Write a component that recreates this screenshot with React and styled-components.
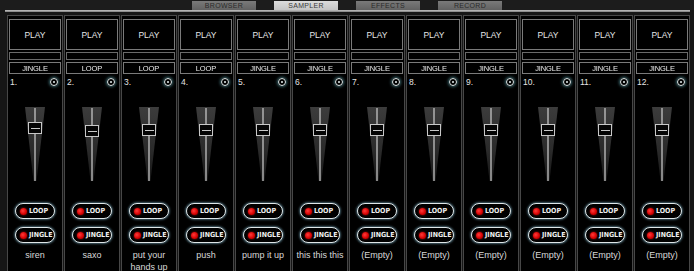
import React from "react";
import styled, { createGlobalStyle } from "styled-components";

const GlobalStyle = createGlobalStyle`
  html, body { margin: 0; padding: 0; }
  body {
    background: #161616;
    width: 694px;
    height: 271px;
    overflow: hidden;
    font-family: "Liberation Sans", Arial, sans-serif;
    -webkit-font-smoothing: antialiased;
  }
`;

const Page = styled.div`
  width: 694px;
  height: 271px;
  overflow: hidden;
  background: #161616;
`;

const TopBar = styled.div`
  height: 10px;
  display: flex;
  align-items: flex-end;
  gap: 18px;
  padding-left: 192px;
  background: #1c1c1c;
`;

const Tab = styled.div`
  width: 64px;
  height: 9px;
  display: flex;
  align-items: center;
  justify-content: center;
  font-size: 7px;
  letter-spacing: 0.3px;
  color: ${(p) => (p.$active ? "#3a3a3a" : "#2a2a2a")};
  background: ${(p) =>
    p.$active
      ? "linear-gradient(#dcdcdc, #c4c4c4)"
      : "linear-gradient(#7a7a7a, #626262)"};
`;

const Rule = styled.div`
  height: 2px;
  margin: 0 4px 0 5px;
  background: linear-gradient(#c4c4c4, #7c7c7c);
`;

const Columns = styled.div`
  display: flex;
  gap: 1px;
  padding: 3px 0 0 7px;
`;

const Column = styled.div`
  width: 56px;
  height: 262px;
  box-sizing: border-box;
  border: 1px solid #474747;
  background: #000;
  padding: 3px 1px 0;
  display: flex;
  flex-direction: column;
`;

const PlayBox = styled.div`
  height: 31px;
  box-sizing: border-box;
  border: 1px solid #7a7a7a;
  display: flex;
  align-items: center;
  justify-content: center;
  color: #e6e6e6;
  font-size: 8.5px;
`;

const BlankBox = styled.div`
  margin-top: 2px;
  height: 8px;
  box-sizing: border-box;
  border: 1px solid #6a6a6a;
`;

const LabelBox = styled.div`
  margin-top: 2px;
  height: 12px;
  box-sizing: border-box;
  border: 1px solid #7a7a7a;
  display: flex;
  align-items: center;
  justify-content: center;
  color: #ececec;
  font-size: 7.5px;
  letter-spacing: -0.1px;
  will-change: transform;
`;

const IndexRow = styled.div`
  margin-top: 2px;
  height: 12px;
  display: flex;
  align-items: center;
  justify-content: space-between;
  padding: 0 3px 0 1px;
  color: #e4e4e4;
  font-size: 8.5px;
`;

const Knob = styled.span`
  width: 6px;
  height: 6px;
  border-radius: 50%;
  border: 1px solid #dfe9ea;
  box-shadow: 0 0 3px 1px rgba(110, 190, 200, 0.55);
  display: flex;
  align-items: center;
  justify-content: center;
  &::after {
    content: "";
    width: 2px;
    height: 2px;
    border-radius: 50%;
    background: #e8f0f0;
  }
`;

const Fader = styled.div`
  position: relative;
  align-self: center;
  margin-top: 18px;
  width: 22px;
  height: 76px;
`;

const Handle = styled.div`
  position: absolute;
  left: 4px;
  width: 14px;
  height: 12px;
  box-sizing: border-box;
  border: 1.5px solid #c8c8c8;
  background: #050505;
  display: flex;
  align-items: center;
  justify-content: center;
  &::after {
    content: "";
    width: 9px;
    height: 1px;
    background: #c8c8c8;
  }
`;

const Pill = styled.div`
  align-self: center;
  margin-top: ${(p) => p.$gap}px;
  width: 40px;
  height: 16px;
  box-sizing: border-box;
  border: 1.5px solid #dfe6e8;
  border-radius: 8px;
  background: #000;
  box-shadow: 0 0 2px 1px rgba(120, 170, 190, 0.55);
  display: flex;
  align-items: center;
  gap: 2px;
  padding-left: 4px;
  color: #f0f0f0;
  font-weight: bold;
  font-size: 7px;
  font-family: "Liberation Sans Narrow", "DejaVu Sans Condensed", "Liberation Sans", sans-serif;
`;

const Led = styled.span`
  width: 7px;
  height: 7px;
  border-radius: 50%;
  background: radial-gradient(circle at 40% 40%, #ff3a3a, #d40000 60%, #a00000);
  box-shadow: 0 0 2px rgba(255, 30, 30, 0.7);
  flex: none;
`;

const Name = styled.div`
  margin-top: 6px;
  text-align: center;
  color: #d8d8d8;
  font-size: 9px;
  line-height: 12px;
`;

const pads = [
  { label: "JINGLE", name: "siren", handle: 16 },
  { label: "LOOP", name: "saxo", handle: 19 },
  { label: "LOOP", name: "put your hands up", handle: 18 },
  { label: "LOOP", name: "push", handle: 18 },
  { label: "JINGLE", name: "pump it up", handle: 18 },
  { label: "JINGLE", name: "this this this", handle: 18 },
  { label: "JINGLE", name: "(Empty)", handle: 18 },
  { label: "JINGLE", name: "(Empty)", handle: 18 },
  { label: "JINGLE", name: "(Empty)", handle: 18 },
  { label: "JINGLE", name: "(Empty)", handle: 18 },
  { label: "JINGLE", name: "(Empty)", handle: 18 },
  { label: "JINGLE", name: "(Empty)", handle: 18 },
];

function FaderTrack() {
  return (
    <svg width="22" height="76" viewBox="0 0 22 76" style={{ display: "block" }}>
      <defs>
        <linearGradient id="taper" x1="0" y1="0" x2="0" y2="1">
          <stop offset="0" stopColor="#3c3c3c" />
          <stop offset="0.6" stopColor="#2a2a2a" />
          <stop offset="1" stopColor="#161616" />
        </linearGradient>
      </defs>
      <polygon points="1,1 21,1 12.5,75 9.5,75" fill="url(#taper)" />
      <line x1="11" y1="2" x2="11" y2="75" stroke="#c4c4c4" strokeWidth="1.3" />
    </svg>
  );
}

function Pad({ index, label, name, handle }) {
  return (
    <Column>
      <PlayBox>PLAY</PlayBox>
      <BlankBox />
      <LabelBox>{label}</LabelBox>
      <IndexRow>
        <span>{index}.</span>
        <Knob />
      </IndexRow>
      <Fader>
        <FaderTrack />
        <Handle style={{ top: handle }} />
      </Fader>
      <Pill $gap={21}>
        <Led />
        LOOP
      </Pill>
      <Pill $gap={8}>
        <Led />
        JINGLE
      </Pill>
      <Name>{name}</Name>
    </Column>
  );
}

export default function App() {
  return (
    <Page>
      <GlobalStyle />
      <TopBar>
        <Tab>BROWSER</Tab>
        <Tab $active>SAMPLER</Tab>
        <Tab>EFFECTS</Tab>
        <Tab>RECORD</Tab>
      </TopBar>
      <Rule />
      <Columns>
        {pads.map((p, i) => (
          <Pad key={i} index={i + 1} {...p} />
        ))}
      </Columns>
    </Page>
  );
}
